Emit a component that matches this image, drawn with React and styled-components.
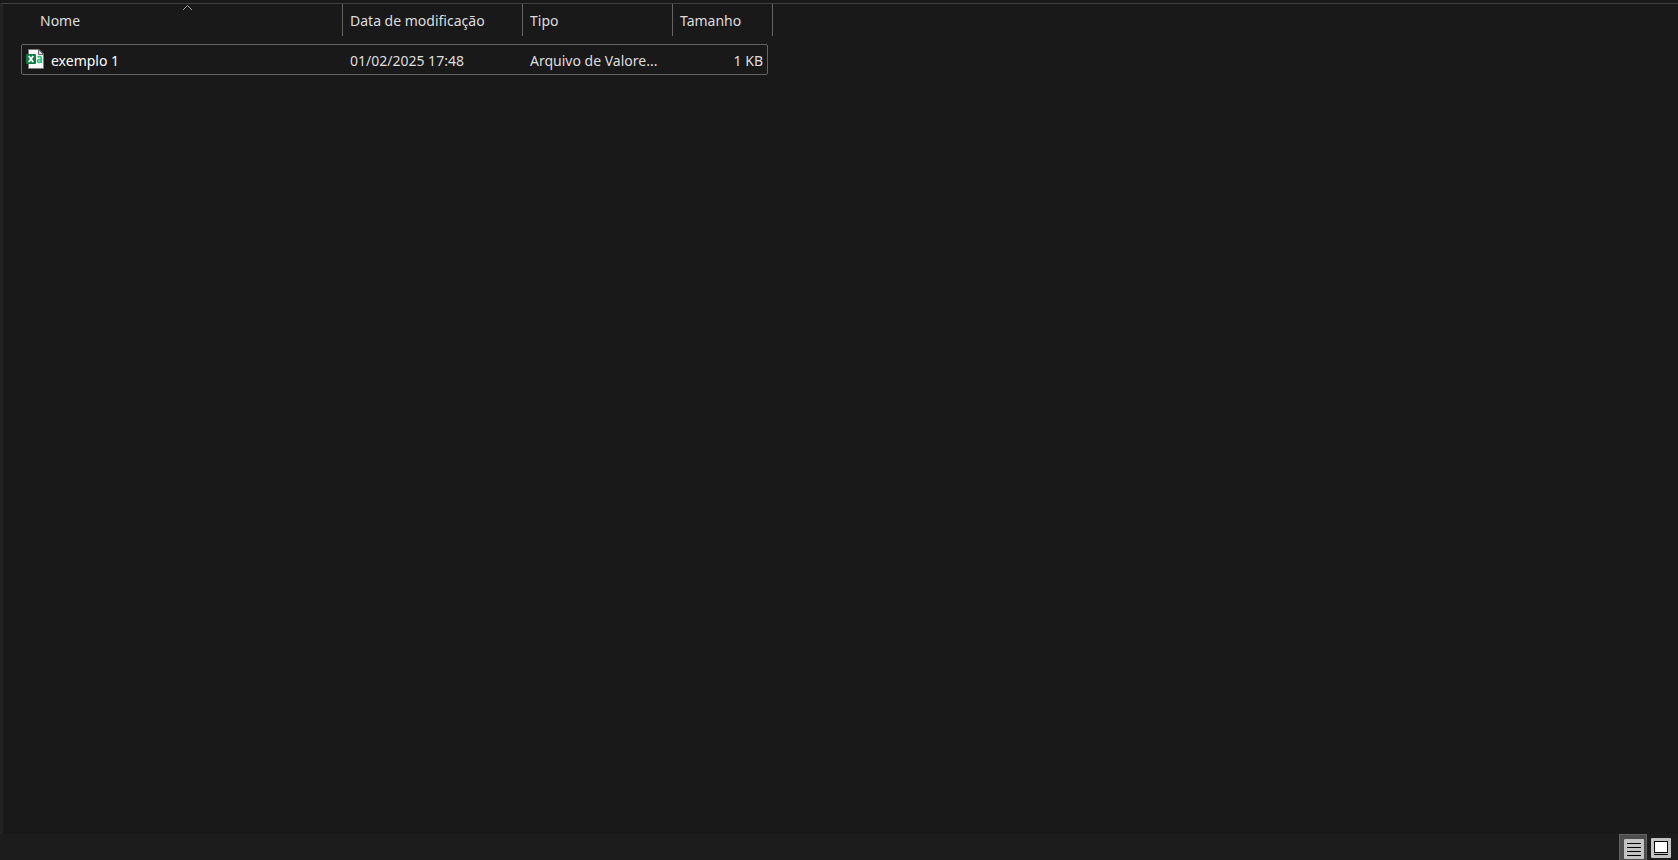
import React, { useState } from 'react'
import styled, { createGlobalStyle } from 'styled-components'

const GlobalStyle = createGlobalStyle`
  * {
    box-sizing: border-box;
  }
  body {
    margin: 0;
    background: #191919;
    color: #dedede;
    font-family: "Noto Sans", "Open Sans", sans-serif;
    font-size: 14px;
    line-height: 24px;
  }
  button {
    font: inherit;
    color: inherit;
    background: none;
    border: 0;
    padding: 0;
  }
`
const Window = styled.div`
  display: flex;
  flex-direction: column;
  min-height: 100vh;
  padding-top: 3px;
`
const Content = styled.main`
  flex: 1;
  border-top: 1px solid #404040;
  border-left: 3px solid #222222;
  padding-left: 18px;
`
const FileTable = styled.table`
  display: block;
  width: 752px;
`
const Head = styled.thead`
  display: block;
`
const Body = styled.tbody`
  display: block;
  padding: 8px 5px 0 0;
`
const HeadRow = styled.tr`
  display: grid;
  grid-template-columns: 1fr 180px 150px 100px;
  height: 32px;
`
const HeadCell = styled.th`
  position: relative;
  border-right: 1px solid #636363;
  padding: 0;
  font-weight: 400;
`
const SortButton = styled.button`
  display: block;
  width: 100%;
  height: 100%;
  padding-top: 2px;
  padding-left: ${({ $first }) => ($first ? '19px' : '7px')};
  text-align: left;
`
const SortArrow = styled.svg`
  position: absolute;
  top: 0;
  left: 50%;
`
const FileRow = styled.tr`
  display: grid;
  grid-template-columns: 1fr 180px 150px 94px;
  height: 31px;
  border: 1px solid #636363;
  border-radius: 2px;
`
const Cell = styled.td`
  padding: 4px 4px 0 7px;
  text-align: ${({ $align }) => $align || 'left'};
  white-space: nowrap;
`
const NameCell = styled(Cell)`
  display: flex;
  align-items: flex-start;
  gap: 7px;
  padding-left: 4px;
  color: #ffffff;
`
const StatusBar = styled.footer`
  display: flex;
  justify-content: flex-end;
  gap: 2px;
  height: 26px;
  padding-right: 5px;
  background: #1c1c1c;
`
const ViewButton = styled.button`
  display: flex;
  width: ${({ $active }) => ($active ? '28px' : '24px')};
  padding: ${({ $active }) => ($active ? '4px 0 0 4px' : '4px 0 0 2px')};
  border: ${({ $active }) => ($active ? '1px solid #636363' : '0')};
  border-bottom: 0;
  background: ${({ $active }) => ($active ? '#4d4d4d' : 'none')};
`

const CsvIcon = () => (
  <svg width="18" height="20" viewBox="0 0 18 20" aria-hidden="true">
    <path d="M2.5 0.5H13L17.5 5V19.5H2.5Z" fill="#f8f8f8" stroke="#7b7b7b" />
    <path d="M12.5 0.5V5.5H17.5Z" fill="#dcdcdc" stroke="#6a6a6a" />
    <rect x="0" y="5" width="10" height="10" rx="1" fill="#107c41" />
    <path d="M2.8 7L7.2 13M7.2 7L2.8 13" stroke="#fff" strokeWidth="1.9" />
    <path d="M11.6 8.2C13 7.2 15.3 7.4 15.3 9.3V14M15.3 10.4C12.7 10.3 11.4 10.9 11.5 12.1C11.8 13.9 14.4 13.6 15.3 11.9" fill="none" stroke="#33c481" strokeWidth="1.7" />
  </svg>
)
const DetailsIcon = () => (
  <svg width="20" height="20" viewBox="0 0 20 20" aria-hidden="true">
    <rect width="20" height="20" rx="1" fill="#c3c3c3" />
    <path d="M3 4.5H17M3 8.5H17M3 12.5H17M3 16.5H17" stroke="#000" />
  </svg>
)
const ThumbsIcon = () => (
  <svg width="20" height="20" viewBox="0 0 20 20" aria-hidden="true">
    <rect width="20" height="20" rx="1" fill="#c3c3c3" />
    <rect x="3.5" y="3.5" width="13" height="11" fill="#fff" stroke="#000" />
    <path d="M3 16.5H17" stroke="#000" />
  </svg>
)

const columns = ['Nome', 'Data de modificação', 'Tipo', 'Tamanho']
const files = [
  { name: 'exemplo 1', date: '01/02/2025 17:48', type: 'Arquivo de Valore...', size: '1 KB' },
]

const App = () => {
  const [view, setView] = useState('details')
  return (
    <Window>
      <GlobalStyle />
      <Content>
        <FileTable>
          <Head>
            <HeadRow>
              {columns.map((title, i) => (
                <HeadCell key={title} scope="col">
                  <SortButton type="button" $first={i === 0}>{title}</SortButton>
                  {i === 0 && (
                    <SortArrow width="11" height="7" viewBox="0 0 11 7" aria-hidden="true">
                      <path d="M1 6L5.5 1.5L10 6" fill="none" stroke="#a0a0a0" />
                    </SortArrow>
                  )}
                </HeadCell>
              ))}
            </HeadRow>
          </Head>
          <Body>
            {files.map(file => (
              <FileRow key={file.name}>
                <NameCell><CsvIcon />{file.name}</NameCell>
                <Cell>{file.date}</Cell>
                <Cell>{file.type}</Cell>
                <Cell $align="right">{file.size}</Cell>
              </FileRow>
            ))}
          </Body>
        </FileTable>
      </Content>
      <StatusBar>
        <ViewButton
          type="button"
          aria-label="Detalhes"
          $active={view === 'details'}
          onClick={() => setView('details')}
        >
          <DetailsIcon />
        </ViewButton>
        <ViewButton
          type="button"
          aria-label="Miniaturas"
          $active={view === 'thumbs'}
          onClick={() => setView('thumbs')}
        >
          <ThumbsIcon />
        </ViewButton>
      </StatusBar>
    </Window>
  )
}

export default App
